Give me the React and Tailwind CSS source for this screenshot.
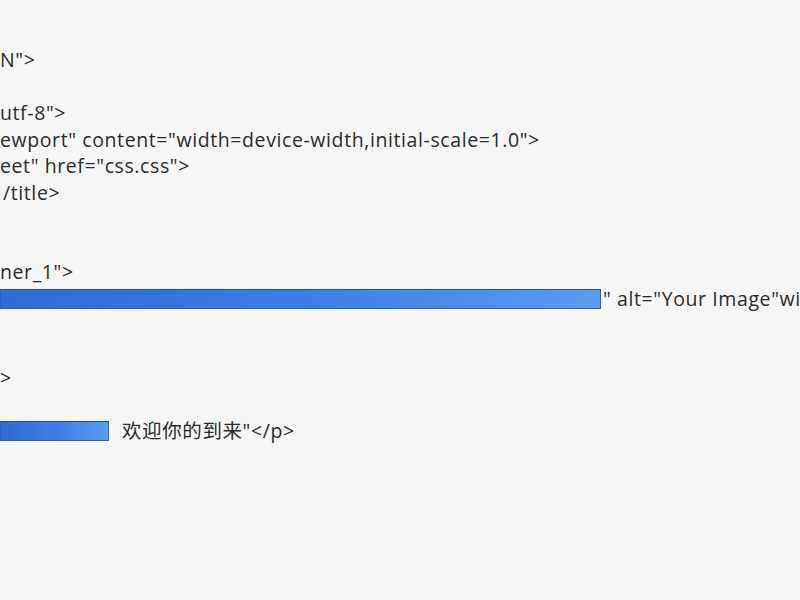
import React from 'react';

// Cropped view of an HTML source file, with two highlighted (selected) spans
const Line = ({ children }) => (
  <div className="h-[26.5px] leading-[26.5px] whitespace-nowrap">{children}</div>
);

const Highlight = ({ width }) => (
  <span
    className={`inline-block shrink-0 align-middle h-[20px] border border-[#2d5fb4] border-t-[#264f9a] bg-gradient-to-r from-[#2e6bd3] via-[#3a7ee5] to-[#5a9cf1] ${width}`}
  ></span>
);

export default function App() {
  return (
    <div
      className="w-[800px] h-[600px] overflow-hidden bg-[#f6f6f6] text-[#2b2b2b] text-[19.5px] tracking-[0.6px]"
      style={{ fontFamily: '"Open Sans", "Noto Sans CJK SC", sans-serif' }}
    >
      <div className="-mt-[6px]">
        <Line></Line>
        <Line></Line>
        <Line>N"&gt;</Line>
        <Line></Line>
        <Line>utf-8"&gt;</Line>
        <Line>ewport" content="width=device-width,initial-scale=1.0"&gt;</Line>
        <Line>eet" href="css.css"&gt;</Line>
        <Line>
          <span className="pl-[3px]">/title&gt;</span>
        </Line>
        <Line></Line>
        <Line></Line>
        <Line>ner_1"&gt;</Line>
        <Line>
          <div className="flex items-center">
            <Highlight width="w-[601px]" />
            <span className="ml-[2px]">" alt="Your Image"width</span>
          </div>
        </Line>
        <Line></Line>
        <Line></Line>
        <Line>&gt;</Line>
        <Line></Line>
        <Line>
          <div className="flex items-center">
            <Highlight width="w-[109px]" />
            <span className="ml-[13px]">欢迎你的到来"&lt;/p&gt;</span>
          </div>
        </Line>
      </div>
    </div>
  );
}
